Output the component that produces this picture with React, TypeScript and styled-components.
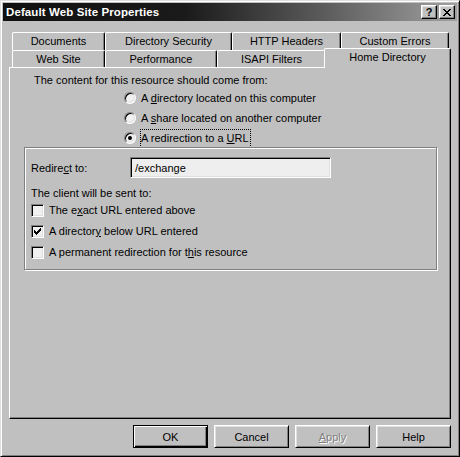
import React from 'react';
import styled, { createGlobalStyle } from 'styled-components';

const GlobalStyle = createGlobalStyle`
  html, body {
    margin: 0;
    padding: 0;
    background: #c0c0c0;
  }
  * {
    box-sizing: border-box;
  }
`;

const FACE = '#c0c0c0';
const LIGHT = '#dfdfdf';
const SHADOW = '#808080';
const DARK = '#000000';
const FONT = `"Liberation Sans", Arial, sans-serif`;

const rowOneTabs = [
  { label: 'Documents', width: 93 },
  { label: 'Directory Security', width: 127 },
  { label: 'HTTP Headers', width: 109 },
  { label: 'Custom Errors', width: 108 },
];

const rowTwoTabs = [
  { label: 'Web Site', width: 93 },
  { label: 'Performance', width: 112 },
  { label: 'ISAPI Filters', width: 109 },
  { label: 'Home Directory', width: 123, active: true },
];

const checkPixels = [
  [6, 0], [5, 1], [6, 1], [0, 2], [4, 2], [5, 2], [6, 2],
  [0, 3], [1, 3], [3, 3], [4, 3], [5, 3],
  [0, 4], [1, 4], [2, 4], [3, 4], [4, 4],
  [1, 5], [2, 5], [3, 5], [2, 6],
];

const closePixels = [
  [0, 0], [1, 0], [6, 0], [7, 0],
  [1, 1], [2, 1], [5, 1], [6, 1],
  [2, 2], [3, 2], [4, 2], [5, 2],
  [3, 3], [4, 3],
  [2, 4], [3, 4], [4, 4], [5, 4],
  [1, 5], [2, 5], [5, 5], [6, 5],
  [0, 6], [1, 6], [6, 6], [7, 6],
];

const App: React.FC = () => {
  return (
    <>
      <GlobalStyle />
      <Window>
        <TitleBar>
          <TitleText>Default Web Site Properties</TitleText>
          <CaptionButtons>
            <CaptionButton>?</CaptionButton>
            <CaptionButton $gap>
              <PixelGlyph pixels={closePixels} w={8} h={7} />
            </CaptionButton>
          </CaptionButtons>
        </TitleBar>

        <Body>
          <TabStrip>
            <TabRow $height={18}>
              {rowOneTabs.map((t) => (
                <Tab key={t.label} $width={t.width} $height={18}>
                  {t.label}
                </Tab>
              ))}
            </TabRow>
            <TabRow $height={17}>
              {rowTwoTabs.map((t) =>
                t.active ? (
                  <ActiveTab key={t.label} $width={t.width + 4}>
                    {t.label}
                  </ActiveTab>
                ) : (
                  <Tab key={t.label} $width={t.width} $height={17}>
                    {t.label}
                  </Tab>
                )
              )}
            </TabRow>
          </TabStrip>

          <Panel>
            <Heading>The content for this resource should come from:</Heading>
            <RadioGroup>
              <RadioRow>
                <RadioCircle />
                <OptionLabel>
                  A <u>d</u>irectory located on this computer
                </OptionLabel>
              </RadioRow>
              <RadioRow>
                <RadioCircle />
                <OptionLabel>
                  A <u>s</u>hare located on another computer
                </OptionLabel>
              </RadioRow>
              <RadioRow>
                <RadioCircle>
                  <RadioDot />
                </RadioCircle>
                <OptionLabel $focused>
                  A redirection to a <u>U</u>RL
                </OptionLabel>
              </RadioRow>
            </RadioGroup>

            <GroupBox>
              <FieldRow>
                <FieldLabel>
                  Redire<u>c</u>t to:
                </FieldLabel>
                <TextInput>/exchange</TextInput>
              </FieldRow>
              <SubHeading>The client will be sent to:</SubHeading>
              <CheckRow>
                <CheckBox />
                <OptionLabel>
                  The e<u>x</u>act URL entered above
                </OptionLabel>
              </CheckRow>
              <CheckRow>
                <CheckBox>
                  <PixelGlyph pixels={checkPixels} w={7} h={7} />
                </CheckBox>
                <OptionLabel>
                  A director<u>y</u> below URL entered
                </OptionLabel>
              </CheckRow>
              <CheckRow>
                <CheckBox />
                <OptionLabel>
                  A permanent redirection for t<u>h</u>is resource
                </OptionLabel>
              </CheckRow>
            </GroupBox>
          </Panel>

          <ButtonRow>
            <PushButton $default>OK</PushButton>
            <PushButton>Cancel</PushButton>
            <PushButton $disabled>
              <u>A</u>pply
            </PushButton>
            <PushButton>Help</PushButton>
          </ButtonRow>
        </Body>
      </Window>
    </>
  );
};

const PixelGlyph: React.FC<{ pixels: number[][]; w: number; h: number }> = ({ pixels, w, h }) => (
  <svg width={w} height={h} viewBox={`0 0 ${w} ${h}`} shapeRendering="crispEdges">
    {pixels.map(([x, y]) => (
      <rect key={`${x}-${y}`} x={x} y={y} width={1} height={1} fill="#000" />
    ))}
  </svg>
);

const Window = styled.div`
  width: 460px;
  height: 457px;
  background: ${FACE};
  border: 1px solid;
  border-color: ${LIGHT} ${DARK} ${DARK} ${LIGHT};
  box-shadow: inset 1px 1px #fff, inset -1px -1px ${SHADOW};
  padding: 2px;
  display: flex;
  flex-direction: column;
  font-family: ${FONT};
  font-size: 11px;
  color: #000;
`;

const TitleBar = styled.div`
  height: 18px;
  flex: none;
  display: flex;
  align-items: center;
  justify-content: space-between;
  padding: 0 2px 0 3px;
  background: linear-gradient(to right, #101010 0%, #1a1a1a 40%, #5a5a5a 70%, #a0a0a0 100%);
`;

const TitleText = styled.span`
  color: #fff;
  font-weight: bold;
  font-size: 11.5px;
  letter-spacing: 0.1px;
`;

const CaptionButtons = styled.div`
  display: flex;
  align-items: center;
`;

const CaptionButton = styled.div<{ $gap?: boolean }>`
  width: 16px;
  height: 14px;
  margin-left: ${(p) => (p.$gap ? '2px' : '0')};
  background: ${FACE};
  border: 1px solid;
  border-color: #fff ${DARK} ${DARK} #fff;
  box-shadow: inset -1px -1px ${SHADOW}, inset 1px 1px ${LIGHT};
  display: flex;
  align-items: center;
  justify-content: center;
  font-weight: bold;
  font-size: 11px;
  line-height: 12px;
  color: #000;
`;

const Body = styled.div`
  flex: 1;
  display: flex;
  flex-direction: column;
  padding: 11px 6px 6px 6px;
`;

const TabStrip = styled.div`
  display: flex;
  flex-direction: column;
  padding-left: 3px;
`;

const TabRow = styled.div<{ $height: number }>`
  display: flex;
  align-items: flex-start;
  height: ${(p) => p.$height}px;
`;

const Tab = styled.div<{ $width: number; $height: number }>`
  width: ${(p) => p.$width}px;
  height: ${(p) => p.$height}px;
  flex: none;
  display: flex;
  align-items: center;
  justify-content: center;
  padding-bottom: 1px;
  border-top: 1px solid #fff;
  border-left: 1px solid #fff;
  border-right: 1px solid ${DARK};
  border-radius: 2px 2px 0 0;
  box-shadow: inset -1px 0 ${SHADOW};
  white-space: nowrap;
`;

const ActiveTab = styled.div<{ $width: number }>`
  position: relative;
  z-index: 1;
  width: ${(p) => p.$width}px;
  height: 20px;
  margin: -2px -2px -1px -2px;
  flex: none;
  display: flex;
  align-items: center;
  justify-content: center;
  padding-bottom: 4px;
  background: ${FACE};
  border-top: 1px solid #fff;
  border-left: 1px solid #fff;
  border-right: 1px solid ${DARK};
  border-radius: 2px 2px 0 0;
  box-shadow: inset -1px 0 ${SHADOW};
  white-space: nowrap;
`;

const Panel = styled.div`
  height: 352px;
  flex: none;
  border: 1px solid;
  border-color: #fff ${DARK} ${DARK} #fff;
  box-shadow: inset -1px -1px ${SHADOW};
  padding: 6px 0 0 14px;
  display: flex;
  flex-direction: column;
`;

const Heading = styled.div`
  height: 13px;
  line-height: 13px;
  padding-left: 10px;
`;

const RadioGroup = styled.div`
  display: flex;
  flex-direction: column;
  padding-left: 100px;
  margin-top: 1px;
`;

const RadioRow = styled.div`
  height: 20px;
  display: flex;
  align-items: center;
`;

const RadioCircle = styled.div`
  width: 12px;
  height: 12px;
  border-radius: 50%;
  border: 1px solid;
  border-color: ${SHADOW} #fff #fff ${SHADOW};
  box-shadow: inset 1px 1px ${DARK}, inset -1px -1px ${LIGHT};
  background: #f0f0f0;
  display: flex;
  align-items: center;
  justify-content: center;
  margin-right: 4px;
  flex: none;
`;

const RadioDot = styled.div`
  width: 4px;
  height: 4px;
  border-radius: 50%;
  background: #000;
`;

const OptionLabel = styled.span<{ $focused?: boolean }>`
  border: 1px dotted ${(p) => (p.$focused ? '#000' : 'transparent')};
  padding: 2px 1px 2px 0;
  line-height: 13px;
  white-space: nowrap;
`;

const GroupBox = styled.div`
  margin-top: -1px;
  width: 413px;
  height: 123px;
  border: 1px solid ${SHADOW};
  box-shadow: inset 1px 1px #fff, 1px 1px #fff;
  padding: 9px 0 0 6px;
  display: flex;
  flex-direction: column;
`;

const FieldRow = styled.div`
  display: flex;
  align-items: center;
  height: 21px;
`;

const FieldLabel = styled.span`
  width: 99px;
  flex: none;
`;

const TextInput = styled.div`
  width: 201px;
  height: 21px;
  border: 1px solid;
  border-color: ${SHADOW} #fff #fff ${SHADOW};
  box-shadow: inset 1px 1px ${DARK}, inset -1px -1px ${LIGHT};
  background: #eeeeee;
  padding: 0 0 0 4px;
  display: flex;
  align-items: center;
`;

const SubHeading = styled.div`
  margin-top: 9px;
  height: 13px;
  line-height: 13px;
`;

const CheckRow = styled.div`
  height: 21px;
  display: flex;
  align-items: center;
  &:first-of-type {
    margin-top: 1px;
  }
`;

const CheckBox = styled.div`
  width: 13px;
  height: 13px;
  flex: none;
  border: 1px solid;
  border-color: ${SHADOW} #fff #fff ${SHADOW};
  box-shadow: inset 1px 1px ${DARK}, inset -1px -1px ${LIGHT};
  background: #f0f0f0;
  display: flex;
  align-items: center;
  justify-content: center;
  margin-right: 4px;
`;

const ButtonRow = styled.div`
  margin-top: 6px;
  display: flex;
  justify-content: flex-end;
  gap: 6px;
`;

const PushButton = styled.div<{ $default?: boolean; $disabled?: boolean }>`
  width: 75px;
  height: 23px;
  display: flex;
  align-items: center;
  justify-content: center;
  background: ${FACE};
  border: 1px solid;
  border-color: ${(p) => (p.$default ? `${DARK}` : `#fff ${DARK} ${DARK} #fff`)};
  box-shadow: ${(p) =>
    p.$default
      ? `inset 1px 1px #fff, inset -1px -1px ${DARK}, inset -2px -2px ${SHADOW}`
      : `inset 1px 1px ${LIGHT}, inset -1px -1px ${SHADOW}`};
  color: ${(p) => (p.$disabled ? SHADOW : '#000')};
  text-shadow: ${(p) => (p.$disabled ? '1px 1px #fff' : 'none')};
`;

export default App;
